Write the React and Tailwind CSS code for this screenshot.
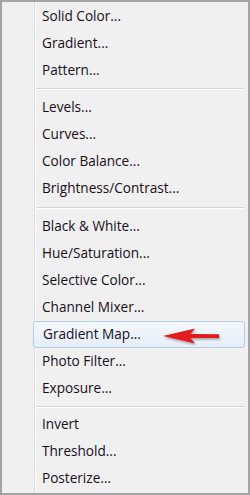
export default function App() {
  const groups = [
    ["Solid Color...", "Gradient...", "Pattern..."],
    ["Levels...", "Curves...", "Color Balance...", "Brightness/Contrast..."],
    ["Black & White...", "Hue/Saturation...", "Selective Color...", "Channel Mixer...", "Gradient Map...", "Photo Filter...", "Exposure..."],
    ["Invert", "Threshold...", "Posterize..."],
  ];
  const sepH = ["h-[10px]", "h-[11px]", "h-[9px]"];
  return (
    <div className="w-[250px] h-[495px] bg-[#f0f0f0] border-2 border-[#a3a3a3] flex" style={{ fontFamily: '"Open Sans", "Noto Sans", sans-serif' }}>
      <div className="w-[33px] border-r border-[#dcdcdc] shrink-0" />
      <div className="w-px bg-white shrink-0" />
      <div className="flex-1 flex flex-col pt-px pr-[3px]">
        {groups.map((g, gi) => (
          <div key={gi} className="flex flex-col">
            {g.map((t) =>
              t === "Gradient Map..." ? (
                <div key={t} className="relative h-[27px] -ml-[3px] flex items-center pl-[9px] text-[13.6px] text-[#180f1c] rounded-[3px] border border-[#b4cbe6] bg-gradient-to-b from-[#f4f8fd] to-[#e6eef9]">
                  {t}
                  <svg className="absolute left-[128px] top-[4px]" width="62" height="20" viewBox="0 0 62 20">
                    <defs>
                      <filter id="sh" x="-20%" y="-40%" width="140%" height="180%">
                        <feDropShadow dx="1" dy="1.5" stdDeviation="1" floodColor="#000" floodOpacity="0.35" />
                      </filter>
                    </defs>
                    <path d="M1 10 L33 2.5 L28.5 8 L57 8.2 L57 12 L28.5 12 L33 17.5 Z" fill="#e21a1a" filter="url(#sh)" />
                  </svg>
                </div>
              ) : (
                <div key={t} className="h-[27px] flex items-center pl-[6px] text-[13.6px] text-[#180f1c]">
                  {t}
                </div>
              )
            )}
            {gi < 3 && (
              <div className={`${sepH[gi]} flex flex-col justify-center`}>
                <div className="h-px bg-[#d7d7d7]" />
                <div className="h-px bg-white" />
              </div>
            )}
          </div>
        ))}
      </div>
    </div>
  );
}
